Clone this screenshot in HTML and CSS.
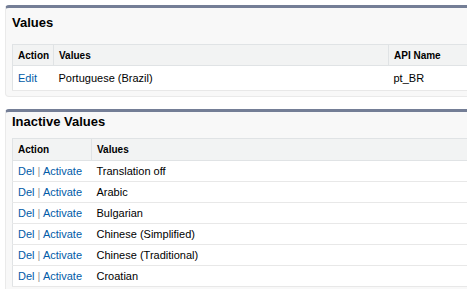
FILE: index.html
```html
<!DOCTYPE html>
<html lang="en">
<head>
    <meta charset="UTF-8">
    <meta name="viewport" content="width=device-width, initial-scale=1.0">
    <title>Picklist Values</title>
    <link rel="stylesheet" href="styles.css">
</head>
<body>
    <!-- Active values -->
    <div class="block block-first">
        <h3 class="block-title">Values</h3>
        <table class="list">
            <tr class="head">
                <th class="col-action">Action</th>
                <th class="col-values">Values</th>
                <th>API Name</th>
            </tr>
            <tr class="row-tall">
                <td><a href="#">Edit</a></td>
                <td>Portuguese (Brazil)</td>
                <td>pt_BR</td>
            </tr>
        </table>
    </div>

    <!-- Inactive values -->
    <div class="block">
        <h3 class="block-title">Inactive Values</h3>
        <table class="list">
            <tr class="head">
                <th class="col-action-wide">Action</th>
                <th>Values</th>
            </tr>
            <tr>
                <td><a href="#">Del</a> <span class="sep">|</span> <a href="#">Activate</a></td>
                <td>Translation off</td>
            </tr>
            <tr>
                <td><a href="#">Del</a> <span class="sep">|</span> <a href="#">Activate</a></td>
                <td>Arabic</td>
            </tr>
            <tr>
                <td><a href="#">Del</a> <span class="sep">|</span> <a href="#">Activate</a></td>
                <td>Bulgarian</td>
            </tr>
            <tr>
                <td><a href="#">Del</a> <span class="sep">|</span> <a href="#">Activate</a></td>
                <td>Chinese (Simplified)</td>
            </tr>
            <tr>
                <td><a href="#">Del</a> <span class="sep">|</span> <a href="#">Activate</a></td>
                <td>Chinese (Traditional)</td>
            </tr>
            <tr>
                <td><a href="#">Del</a> <span class="sep">|</span> <a href="#">Activate</a></td>
                <td>Croatian</td>
            </tr>
        </table>
    </div>
</body>
</html>
```

FILE: styles.css
```css
html {
    overflow: hidden;
}
body {
    font-family: Arial, "Liberation Sans", sans-serif;
    font-size: 11px;
    color: #000;
    margin: 0;
    padding: 5px 0 0 5px;
    background: #fff;
}
.block {
    width: 600px;
    background: #f8f8f8;
    border: 1px solid #eaeaea;
    border-top: 3px solid #747e96;
    border-radius: 4px;
    padding: 0 0 5px 6px;
    margin-bottom: 12px;
}
.block-title {
    font-size: 13px;
    line-height: 16px;
    font-weight: bold;
    margin: 0;
    padding: 2px 0 8px 0;
}
.block-first .block-title {
    padding: 7px 0 13px 0;
}
.list {
    width: 100%;
    border-collapse: collapse;
    background: #fff;
    border: 1px solid #e0e3e5;
}
.list th {
    background: #f2f3f3;
    font-size: 10px;
    font-weight: bold;
    text-align: left;
    height: 20px;
    padding: 0 2px 0 5px;
    border: 1px solid #e0e3e5;
}
.list td {
    height: 20px;
    padding: 0 2px 0 5px;
    border-bottom: 1px solid #e8e8e8;
    white-space: nowrap;
}
.list .row-tall td {
    height: 22px;
    padding-top: 1px;
    padding-bottom: 1px;
}
.col-action {
    width: 33px;
}
.col-values {
    width: 327px;
}
.col-action-wide {
    width: 71px;
}
.col-action-wide,
.block + .block th {
    height: 21px;
}
a {
    color: #015ba7;
    text-decoration: none;
}
.sep {
    color: #999;
}
```
